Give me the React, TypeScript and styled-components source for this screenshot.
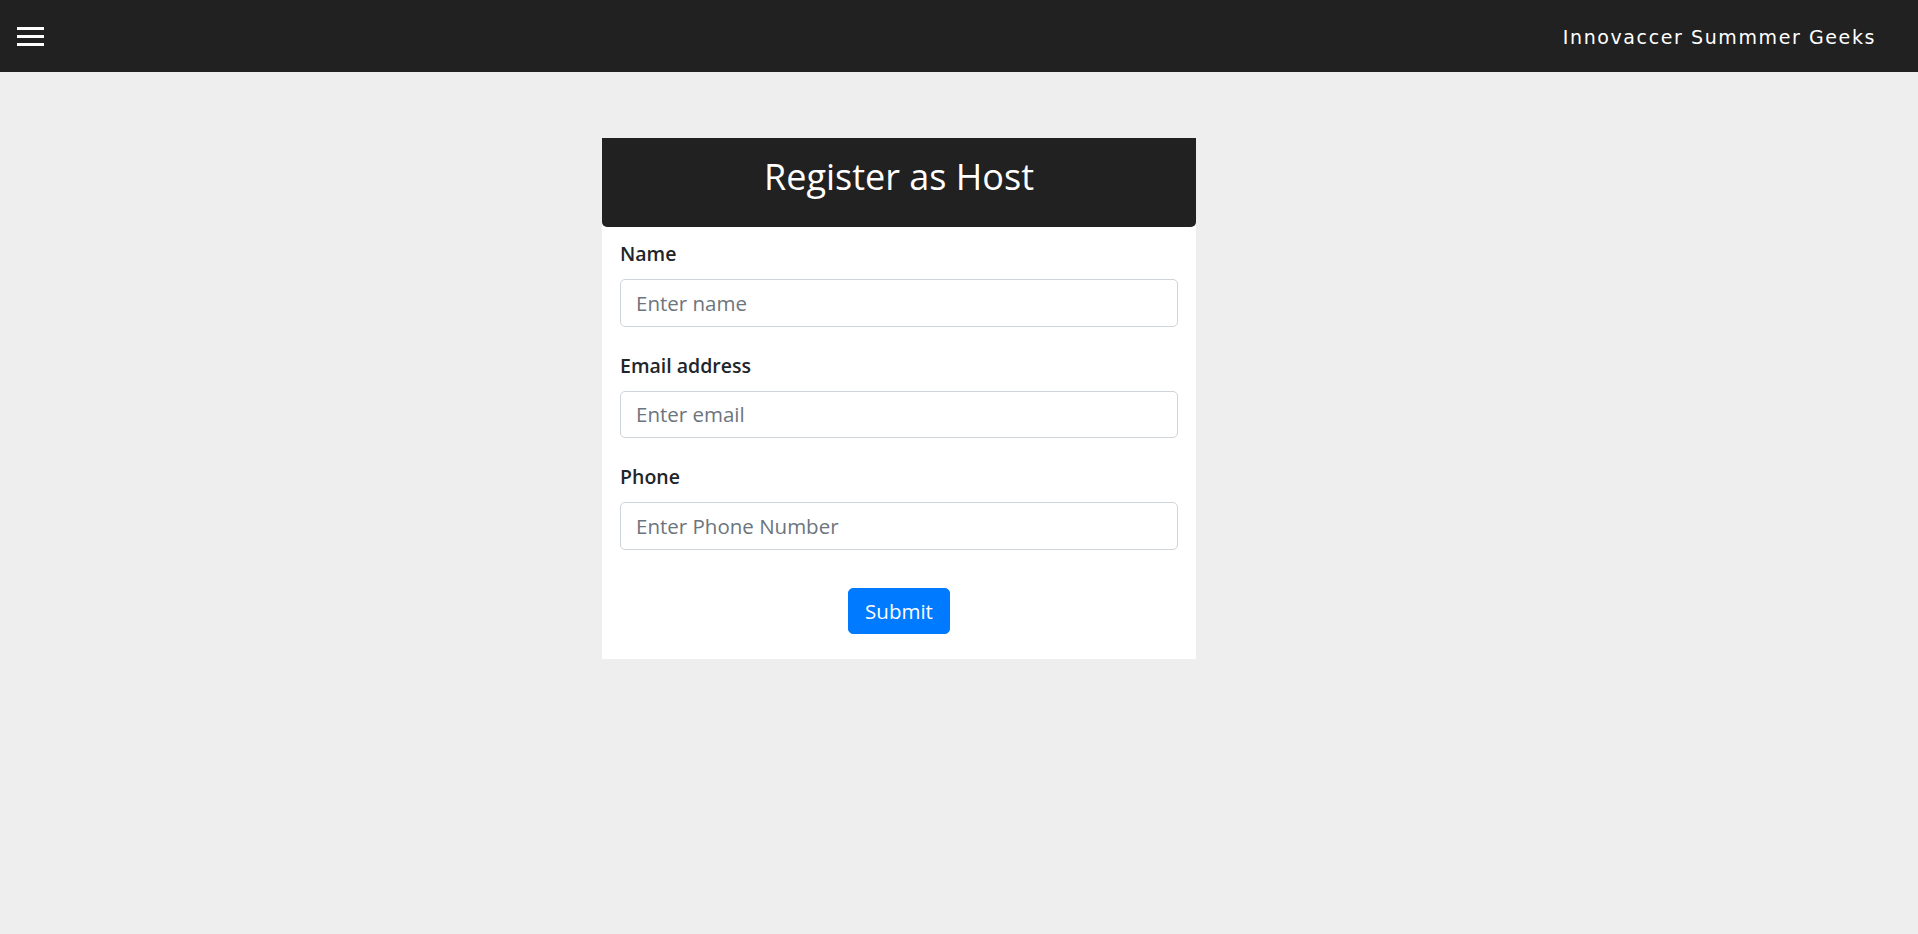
import React from "react";
import styled, { createGlobalStyle } from "styled-components";

const Global = createGlobalStyle`
  html, body { margin: 0; padding: 0; }
  body {
    background: #eeeeee;
    font-family: "Open Sans", "Noto Sans", sans-serif;
    color: #212529;
  }
  * { box-sizing: border-box; }
`;

const Page = styled.div`
  min-height: 934px;
  background: #eeeeee;
  display: flex;
  flex-direction: column;
`;

const NavBar = styled.header`
  height: 72px;
  background: #212121;
  display: flex;
  align-items: center;
  justify-content: space-between;
  padding: 0 42px 0 17px;
`;

const MenuButton = styled.button`
  width: 27px;
  height: 19px;
  padding: 0;
  border: none;
  background: transparent;
  display: flex;
  flex-direction: column;
  justify-content: space-between;
  cursor: pointer;
  margin-top: 1px;
`;

const MenuBar = styled.span`
  display: block;
  width: 27px;
  height: 3px;
  background: #ffffff;
`;

const Brand = styled.div`
  font-family: "DejaVu Sans", Verdana, sans-serif;
  font-size: 19px;
  letter-spacing: 1.6px;
  color: #ffffff;
  margin-top: 1px;
`;

const Main = styled.main`
  display: flex;
  justify-content: center;
  padding-top: 66px;
  padding-right: 120px;
`;

const Card = styled.section`
  width: 594px;
  background: #ffffff;
  display: flex;
  flex-direction: column;
`;

const CardHeader = styled.div`
  height: 89px;
  background: #212121;
  border-radius: 0 0 5px 5px;
  display: flex;
  align-items: center;
  justify-content: center;
`;

const Title = styled.h3`
  margin: 0;
  margin-top: -11px;
  font-family: "Open Sans", "Noto Sans", sans-serif;
  font-weight: 400;
  font-size: 36px;
  color: #ffffff;
  line-height: 1.2;
`;

const CardBody = styled.form`
  padding: 12px 18px 25px 18px;
  display: flex;
  flex-direction: column;
`;

const FormGroup = styled.div`
  display: flex;
  flex-direction: column;
  margin-bottom: 24px;
`;

const Label = styled.label`
  font-size: 19.5px;
  line-height: 30px;
  font-weight: 600;
  color: #212529;
  margin-bottom: 10px;
`;

const Input = styled.input`
  height: 47.5px;
  width: 100%;
  padding: 7px 15px;
  font-family: "Open Sans", "Noto Sans", sans-serif;
  font-size: 20.5px;
  color: #495057;
  background: #ffffff;
  border: 1px solid #ced4da;
  border-radius: 5px;
  outline: none;
  &::placeholder { color: #6c757d; }
`;

const Actions = styled.div`
  display: flex;
  justify-content: center;
  margin-top: 14px;
`;

const SubmitButton = styled.button`
  height: 46.5px;
  padding: 0 16px;
  font-family: "Open Sans", "Noto Sans", sans-serif;
  font-size: 20.5px;
  color: #ffffff;
  background: #007bff;
  border: 1px solid #007bff;
  border-radius: 5px;
  cursor: pointer;
`;

export default function App() {
  return (
    <Page>
      <Global />
      <NavBar>
        <MenuButton aria-label="menu">
          <MenuBar />
          <MenuBar />
          <MenuBar />
        </MenuButton>
        <Brand>Innovaccer Summmer Geeks</Brand>
      </NavBar>
      <Main>
        <Card>
          <CardHeader>
            <Title>Register as Host</Title>
          </CardHeader>
          <CardBody onSubmit={(e) => e.preventDefault()}>
            <FormGroup>
              <Label>Name</Label>
              <Input placeholder="Enter name" />
            </FormGroup>
            <FormGroup>
              <Label>Email address</Label>
              <Input type="email" placeholder="Enter email" />
            </FormGroup>
            <FormGroup>
              <Label>Phone</Label>
              <Input placeholder="Enter Phone Number" />
            </FormGroup>
            <Actions>
              <SubmitButton type="submit">Submit</SubmitButton>
            </Actions>
          </CardBody>
        </Card>
      </Main>
    </Page>
  );
}
